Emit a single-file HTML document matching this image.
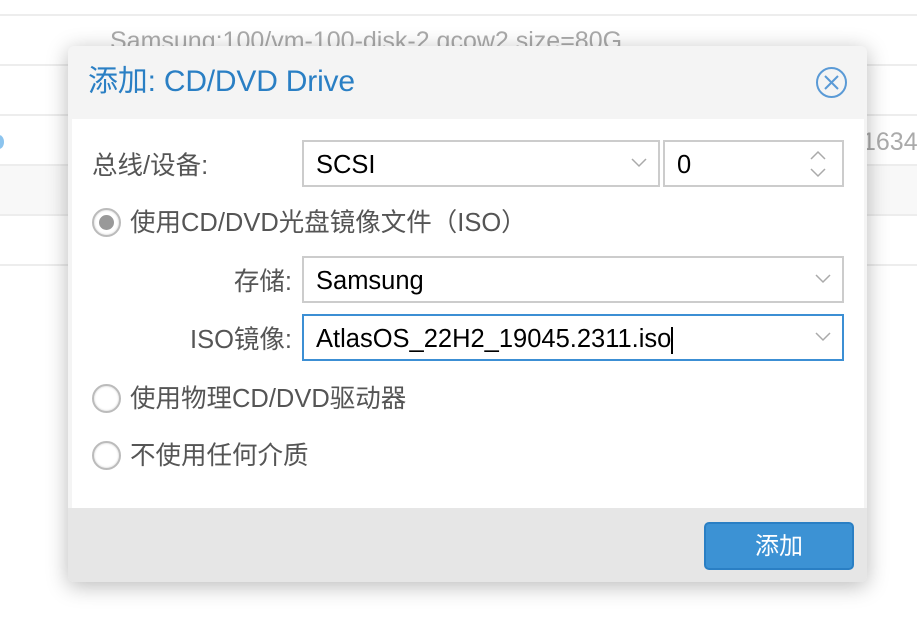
<!DOCTYPE html>
<html><head><meta charset="utf-8"><style>
*{box-sizing:border-box;margin:0;padding:0}
body{width:917px;height:624px;position:relative;background:#fff;overflow:hidden;font-family:"Liberation Sans","Noto Sans CJK SC",sans-serif}
.hl{position:absolute;left:0;width:917px;height:2px;background:#ededed}
.bgt{position:absolute;color:#aaa;font-size:25px;line-height:30px}
.dlg{position:absolute;left:68px;top:46px;width:799px;height:536px;background:#f4f4f4;border-radius:6px;box-shadow:0 4px 22px rgba(0,0,0,.28)}
.title{position:absolute;left:88px;top:63px;font-size:30px;line-height:38px;color:#2a7fc4;letter-spacing:-0.2px}
.body{position:absolute;left:72px;top:119px;width:792px;height:389px;background:#fff}
.foot{position:absolute;left:68px;top:508px;width:799px;height:74px;background:#e6e6e6;border-radius:0 0 6px 6px}
.lbl{position:absolute;font-size:25.5px;line-height:30px;color:#555;white-space:nowrap}
.rl{text-align:right;width:260px}
.fld{position:absolute;border:2px solid #ccc;background:#fff;font-size:25.5px;color:#000;padding-left:12px;line-height:46px;white-space:nowrap}
.chev{position:absolute;right:10px;top:15px}
.radio{position:absolute;width:29px;height:29px;border-radius:50%;border:2px solid #bbb;background:#fff;box-shadow:inset 0 0 2px #ccc}
.btn{position:absolute;left:704px;top:522px;width:150px;height:48px;background:#3c92d4;border:2px solid #2a7fc4;border-radius:5px;color:#fff;font-size:24px;text-align:center;line-height:46px}
</style></head><body>
<div class="hl" style="top:14px"></div>
<div class="hl" style="top:64px"></div>
<div class="hl" style="top:114px"></div>
<div style="position:absolute;left:0;top:165px;width:917px;height:49px;background:#f8f8f8"></div>
<div class="hl" style="top:164px"></div>
<div class="hl" style="top:214px"></div>
<div class="hl" style="top:264px"></div>
<div class="bgt" style="left:110px;top:26px">Samsung:100/vm-100-disk-2.qcow2,size=80G</div>
<div class="bgt" style="left:862px;top:127px">1634</div>
<div style="position:absolute;left:-6px;top:135px;width:10px;height:14px;border-radius:50%;background:#8cc4ee"></div>
<div class="dlg"></div>
<div class="title">添加: CD/DVD Drive</div>
<svg style="position:absolute;left:815px;top:66px" width="33" height="33" viewBox="0 0 33 33"><circle cx="16.5" cy="16.5" r="14.5" fill="none" stroke="#5a9ad6" stroke-width="2"/><path d="M10 10L23 23M23 10L10 23" stroke="#5a9ad6" stroke-width="2"/></svg>
<div class="body"></div>
<div class="foot"></div>
<div class="lbl" style="left:92px;top:151px">总线/设备:</div>
<div class="fld" style="left:302px;top:140px;width:358px;height:47px">SCSI<svg class="chev" width="18" height="12"><path d="M2 2L9 9L16 2" fill="none" stroke="#aaa" stroke-width="1.5"/></svg></div>
<div class="fld" style="left:663px;top:140px;width:181px;height:47px">0<svg style="position:absolute;right:14px;top:7px" width="20" height="30"><path d="M3 10L10 3L17 10M3 20L10 27L17 20" fill="none" stroke="#aaa" stroke-width="1.5"/></svg></div>
<div class="radio" style="left:92px;top:208px"><div style="position:absolute;left:5px;top:5px;width:15px;height:15px;border-radius:50%;background:#999"></div></div>
<div class="lbl" style="left:130px;top:208px">使用CD/DVD光盘镜像文件（ISO）</div>
<div class="lbl rl" style="left:32px;top:267px">存储:</div>
<div class="fld" style="left:302px;top:256px;width:542px;height:47px">Samsung<svg class="chev" width="18" height="12"><path d="M2 2L9 9L16 2" fill="none" stroke="#aaa" stroke-width="1.5"/></svg></div>
<div class="lbl rl" style="left:32px;top:325px">ISO镜像:</div>
<div class="fld" style="left:302px;top:314px;width:542px;height:47px;border-color:#3c8fd4">AtlasOS_22H2_19045.2311.iso<span style="display:inline-block;width:2px;height:27px;background:#000;vertical-align:middle"></span><svg class="chev" width="18" height="12"><path d="M2 2L9 9L16 2" fill="none" stroke="#aaa" stroke-width="1.5"/></svg></div>
<div class="radio" style="left:92px;top:384px"></div>
<div class="lbl" style="left:130px;top:384px">使用物理CD/DVD驱动器</div>
<div class="radio" style="left:92px;top:441px"></div>
<div class="lbl" style="left:130px;top:441px">不使用任何介质</div>
<div class="btn">添加</div>
</body></html>
